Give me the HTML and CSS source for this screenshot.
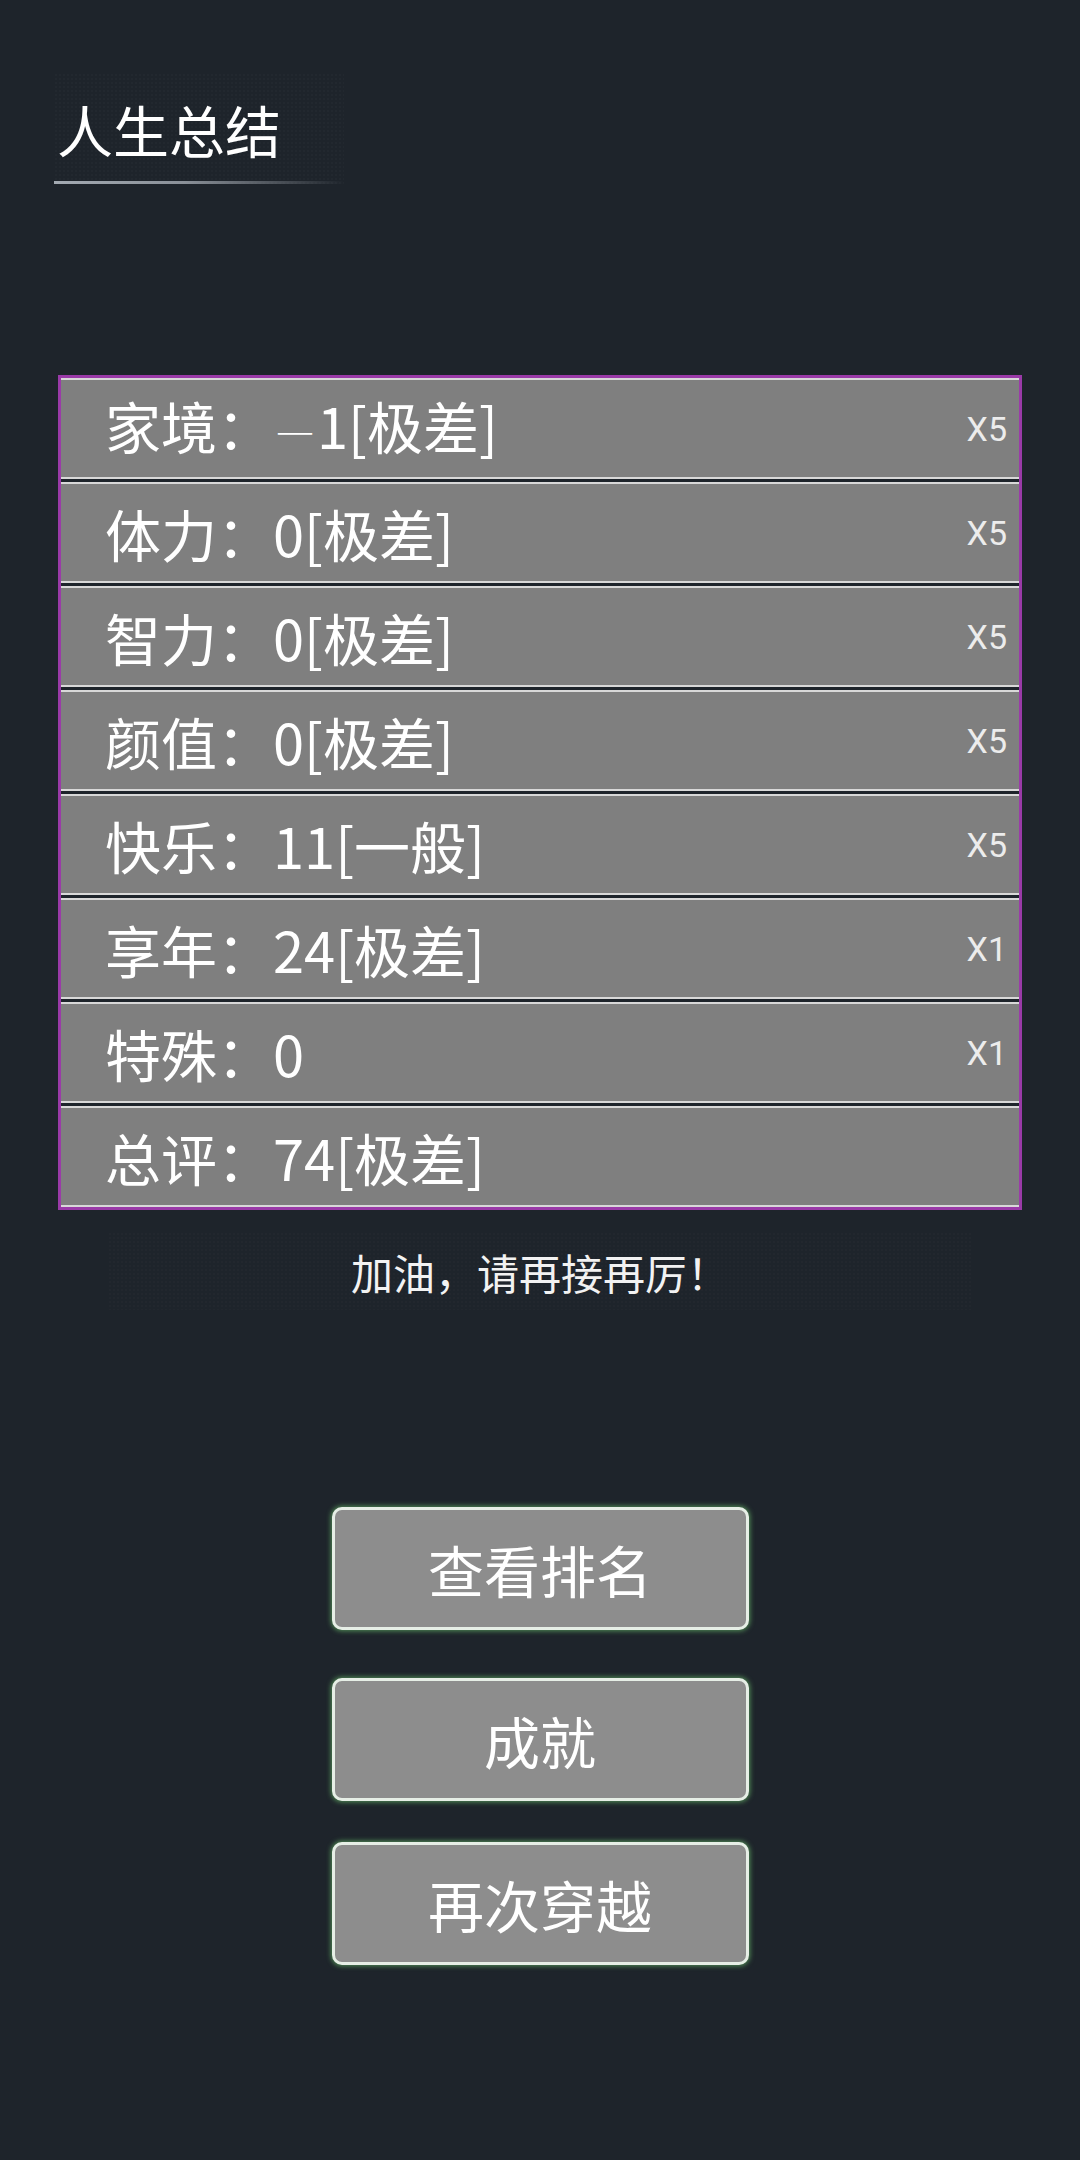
FILE: index.html
```html
<!DOCTYPE html>
<html lang="zh-CN">
<head>
<meta charset="utf-8">
<title>人生总结</title>
<link rel="stylesheet" href="styles.css">
</head>
<body>
<div class="page">
  <header class="title-block">
    <h1 class="title">人生总结</h1>
    <div class="title-line"></div>
  </header>

  <section class="stats">
    <div class="row"><span class="label">家境：<span class="dash">—</span>1[极差]</span><span class="mult">X5</span></div>
    <div class="row"><span class="label">体力：0[极差]</span><span class="mult">X5</span></div>
    <div class="row"><span class="label">智力：0[极差]</span><span class="mult">X5</span></div>
    <div class="row"><span class="label">颜值：0[极差]</span><span class="mult">X5</span></div>
    <div class="row"><span class="label">快乐：11[一般]</span><span class="mult">X5</span></div>
    <div class="row"><span class="label">享年：24[极差]</span><span class="mult">X1</span></div>
    <div class="row"><span class="label">特殊：0</span><span class="mult">X1</span></div>
    <div class="row"><span class="label">总评：74[极差]</span></div>
  </section>

  <div class="cheer">加油，请再接再厉！</div>

  <div class="actions">
    <button class="btn btn-rank">查看排名</button>
    <button class="btn btn-achieve">成就</button>
    <button class="btn btn-again">再次穿越</button>
  </div>
</div>
</body>
</html>
```

FILE: styles.css
```css
* {
  box-sizing: border-box;
}

html,
body {
  margin: 0;
  padding: 0;
}

body {
  background: #1e242b;
  color: #ffffff;
  font-family: "Noto Sans CJK SC", "Noto Sans", sans-serif;
  font-weight: 400;
}

.page {
  width: 1080px;
  min-height: 2160px;
  padding-top: 73px;
}

/* ---------- title ---------- */
.title-block {
  margin-left: 54px;
  width: 290px;
  padding-top: 28px;
  background-image: radial-gradient(rgba(255, 255, 255, 0.018) 1px, transparent 1.2px);
  background-size: 4px 4px;
}

.title {
  margin: 0 0 24px 0;
  padding-left: 3px;
  font-size: 56px;
  font-weight: 400;
  line-height: 56px;
  color: #ffffff;
}

.title-line {
  height: 3px;
  background: linear-gradient(90deg, #a3aab2 0%, #8a9098 45%, rgba(138, 144, 152, 0) 100%);
}

/* ---------- stats table ---------- */
.stats {
  margin: 191px 0 0 58px;
  width: 964px;
  border: 3px solid #9a3aa8;
  background: #1e242b;
  display: flex;
  flex-direction: column;
  gap: 3px;
}

.row {
  height: 101px;
  background: #7f7f7f;
  border-top: 2px solid #d8d8d8;
  border-bottom: 2px solid #d8d8d8;
  display: flex;
  align-items: center;
  justify-content: space-between;
  padding: 0 12px 0 44px;
}

.label {
  font-size: 56px;
  line-height: 97px;
  color: #ffffff;
  white-space: nowrap;
}

.dash {
  font-size: 40px;
  margin: 0 2px 0 2px;
}

.mult {
  font-family: Roboto, "Liberation Sans", sans-serif;
  font-weight: 400;
  font-size: 34px;
  color: #ececec;
}

/* ---------- cheer message ---------- */
.cheer {
  margin: 22px auto 0;
  width: 864px;
  height: 78px;
  display: flex;
  align-items: center;
  justify-content: center;
  font-size: 42px;
  color: #f2f2f2;
  background-image: radial-gradient(rgba(255, 255, 255, 0.016) 1px, transparent 1.2px);
  background-size: 4px 4px;
}

/* ---------- buttons ---------- */
.actions {
  display: flex;
  flex-direction: column;
  align-items: center;
  margin-top: 197px;
}

.btn {
  width: 417px;
  height: 123px;
  padding: 0;
  border: 3px solid #e6eee6;
  border-radius: 10px;
  background: #8d8d8d;
  box-shadow: 0 0 5px 1px rgba(110, 200, 110, 0.65);
  color: #ffffff;
  font-family: "Noto Sans CJK SC", "Noto Sans", sans-serif;
  font-weight: 400;
  font-size: 56px;
  line-height: 1;
  display: flex;
  align-items: center;
  justify-content: center;
}

.btn-rank {
  margin-bottom: 48px;
}

.btn-achieve {
  margin-bottom: 41px;
}
```
